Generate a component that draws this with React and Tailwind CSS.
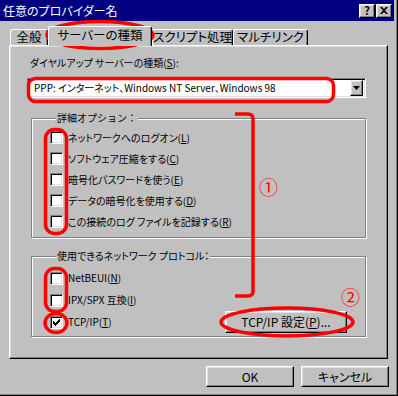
import React from 'react';

// Win98 style property dialog with red hand annotations on top

const raised =
  'border border-t-white border-l-white border-r-black border-b-black shadow-[inset_-1px_-1px_0_#808080,inset_1px_1px_0_#dfdfdf]';
const sunken =
  'border border-t-[#808080] border-l-[#808080] border-r-white border-b-white shadow-[inset_1px_1px_0_#000,inset_-1px_-1px_0_#dfdfdf]';

function U({ children }) {
  return <span className="underline underline-offset-[1px]">{children}</span>;
}

function Tab({ label, active, w }) {
  return (
    <div
      className={
        'flex items-center justify-center rounded-t-[3px] border-t border-l border-r border-t-white border-l-white border-r-black bg-[#c0c0c0] text-[12.5px] shadow-[inset_-1px_0_0_#808080] ' +
        (active ? 'relative z-10 -mb-px h-[20px] pb-[3px]' : 'h-[16px]')
      }
      style={{ width: w }}
    >
      {label}
    </div>
  );
}

function Check({ checked }) {
  return (
    <div className={'flex h-[13px] w-[13px] shrink-0 items-center justify-center bg-white ' + sunken}>
      {checked && (
        <svg width="7" height="7" viewBox="0 0 7 7">
          <path d="M0 2h1v1h1v1h1v-1h1v-1h1v-1h1v-1h1v3h-1v1h-1v1h-1v1h-1v1h-1v-1h-1v-1h-1z" fill="#000" />
        </svg>
      )}
    </div>
  );
}

function Row({ children, checked, h = 'h-[21px]', extra }) {
  return (
    <div className={'flex items-center ' + h}>
      <Check checked={checked} />
      <span className="ml-[5px] text-[10px] leading-[14px]">{children}</span>
      {extra}
    </div>
  );
}

function Button({ children, className = '' }) {
  return (
    <div className={'flex items-center justify-center bg-[#c0c0c0] ' + raised + ' ' + className}>
      {children}
    </div>
  );
}

function Group({ legend, children, className = '', legendClass = '' }) {
  return (
    <fieldset
      className={
        'ml-[21px] w-[335px] border border-[#808080] pl-[18px] shadow-[1px_1px_0_#fff,inset_1px_1px_0_#fff] ' + className
      }
    >
      <legend className={'ml-[6px] bg-[#c0c0c0] px-[1px] text-[10px] leading-[14px] ' + legendClass}>{legend}</legend>
      {children}
    </fieldset>
  );
}

function Annotations() {
  return (
    <svg className="pointer-events-none absolute left-0 top-0" width="398" height="396" viewBox="0 0 398 396">
      <g fill="none" stroke="#ff0000" strokeWidth="3.5">
        <ellipse cx="100" cy="35" rx="53" ry="13.5" />
        <rect x="28.5" y="78.5" width="305" height="23" rx="7" />
        <rect x="45.5" y="129.5" width="21" height="104" rx="9" />
        <rect x="45.5" y="268.5" width="21" height="43" rx="9" />
        <ellipse cx="56" cy="323" rx="11" ry="9.5" />
        <ellipse cx="287" cy="322" rx="66" ry="14" />
        <path d="M235 114H248Q253 114 253 119V291Q253 296 248 296H235" />
      </g>
    </svg>
  );
}

export default function App() {
  return (
    <div className="relative h-[396px] w-[398px] overflow-hidden bg-[#c0c0c0] text-[12px] text-black shadow-[inset_-1px_-1px_0_#000,inset_-2px_-2px_0_#808080] [font-family:'Noto_Sans_CJK_JP',sans-serif] [font-feature-settings:'palt']">
      {/* title bar */}
      <div className="flex h-[21px] w-[394px] items-center bg-[#000080] pl-[3px] pr-[2px]">
        <span className="text-[12px] leading-[16px] text-white">任意のプロバイダー名</span>
        <div className="ml-auto flex gap-[1px]">
          <Button className="h-[14px] w-[16px] text-[11px] font-bold leading-none">?</Button>
          <Button className="h-[14px] w-[16px]">
            <svg width="8" height="7" viewBox="0 0 8 7">
              <path d="M0 0h2l2 2 2-2h2L5 3.5 8 7H6L4 5 2 7H0l3-3.5z" fill="#000" />
            </svg>
          </Button>
        </div>
      </div>

      {/* tabs */}
      <div className="ml-[10px] mt-[6px] flex h-[18px] items-end">
        <Tab label="全般" w={38} />
        <Tab label="サーバーの種類" w={104} active />
        <Tab label="スクリプト処理" w={81} />
        <Tab label="マルチリンク" w={75} />
      </div>

      {/* tab page */}
      <div className={'ml-[9px] flex h-[314px] w-[379px] flex-col ' + raised}>
        <div className="ml-[20px] mt-[10px] text-[10px] leading-[14px]">
          ダイヤルアップ サーバーの種類(<U>S</U>):
        </div>
        <div className={'ml-[17px] mt-[8px] flex h-[20px] w-[339px] items-center bg-white pl-[6px] pr-[2px] ' + sunken}>
          <span className="text-[10px] leading-[14px]">PPP: インターネット、Windows NT Server、Windows 98</span>
          <Button className="ml-auto h-[16px] w-[13px]">
            <svg width="7" height="4" viewBox="0 0 7 4">
              <path d="M0 0h7L3.5 4z" fill="#000" />
            </svg>
          </Button>
        </div>

        <Group legend="詳細オプション：" className="mt-[13px] pb-[5px]" legendClass="[font-feature-settings:normal]">
          <div className="pt-[2px]">
            <Row>ネットワークへのログオン(<U>L</U>)</Row>
            <Row>ソフトウェア圧縮をする(<U>C</U>)</Row>
            <Row>暗号化パスワードを使う(<U>E</U>)</Row>
            <Row>データの暗号化を使用する(<U>D</U>)</Row>
            <Row>この接続のログ ファイルを記録する(<U>R</U>)</Row>
          </div>
        </Group>

        <Group legend="使用できるネットワーク プロトコル：" className="mt-[11px] pb-[3px]">
          <div className="pt-[4px]">
            <Row h="h-[22px]">NetBEUI(<U>N</U>)</Row>
            <Row h="h-[22px]">IPX/SPX 互換(<U>I</U>)</Row>
            <Row
              h="h-[22px]"
              checked
              extra={
                <Button className="ml-auto mr-[18px] h-[22px] w-[122px] leading-[14px]">
                  TCP/IP 設定(<U>P</U>)...
                </Button>
              }
            >
              TCP/IP(<U>T</U>)
            </Row>
          </div>
        </Group>
      </div>

      {/* dialog buttons */}
      <div className="mt-[7px] flex justify-end gap-[7px] pr-[9px]">
        <Button className="h-[21px] w-[88px] leading-[14px]">OK</Button>
        <Button className="h-[21px] w-[88px] leading-[14px]">キャンセル</Button>
      </div>

      <Annotations />
      <span className="pointer-events-none absolute left-[259px] top-[176px] text-[19px] leading-[22px] text-[#ff0000]">①</span>
      <span className="pointer-events-none absolute left-[341px] top-[286px] text-[19px] leading-[22px] text-[#ff0000]">②</span>
    </div>
  );
}
